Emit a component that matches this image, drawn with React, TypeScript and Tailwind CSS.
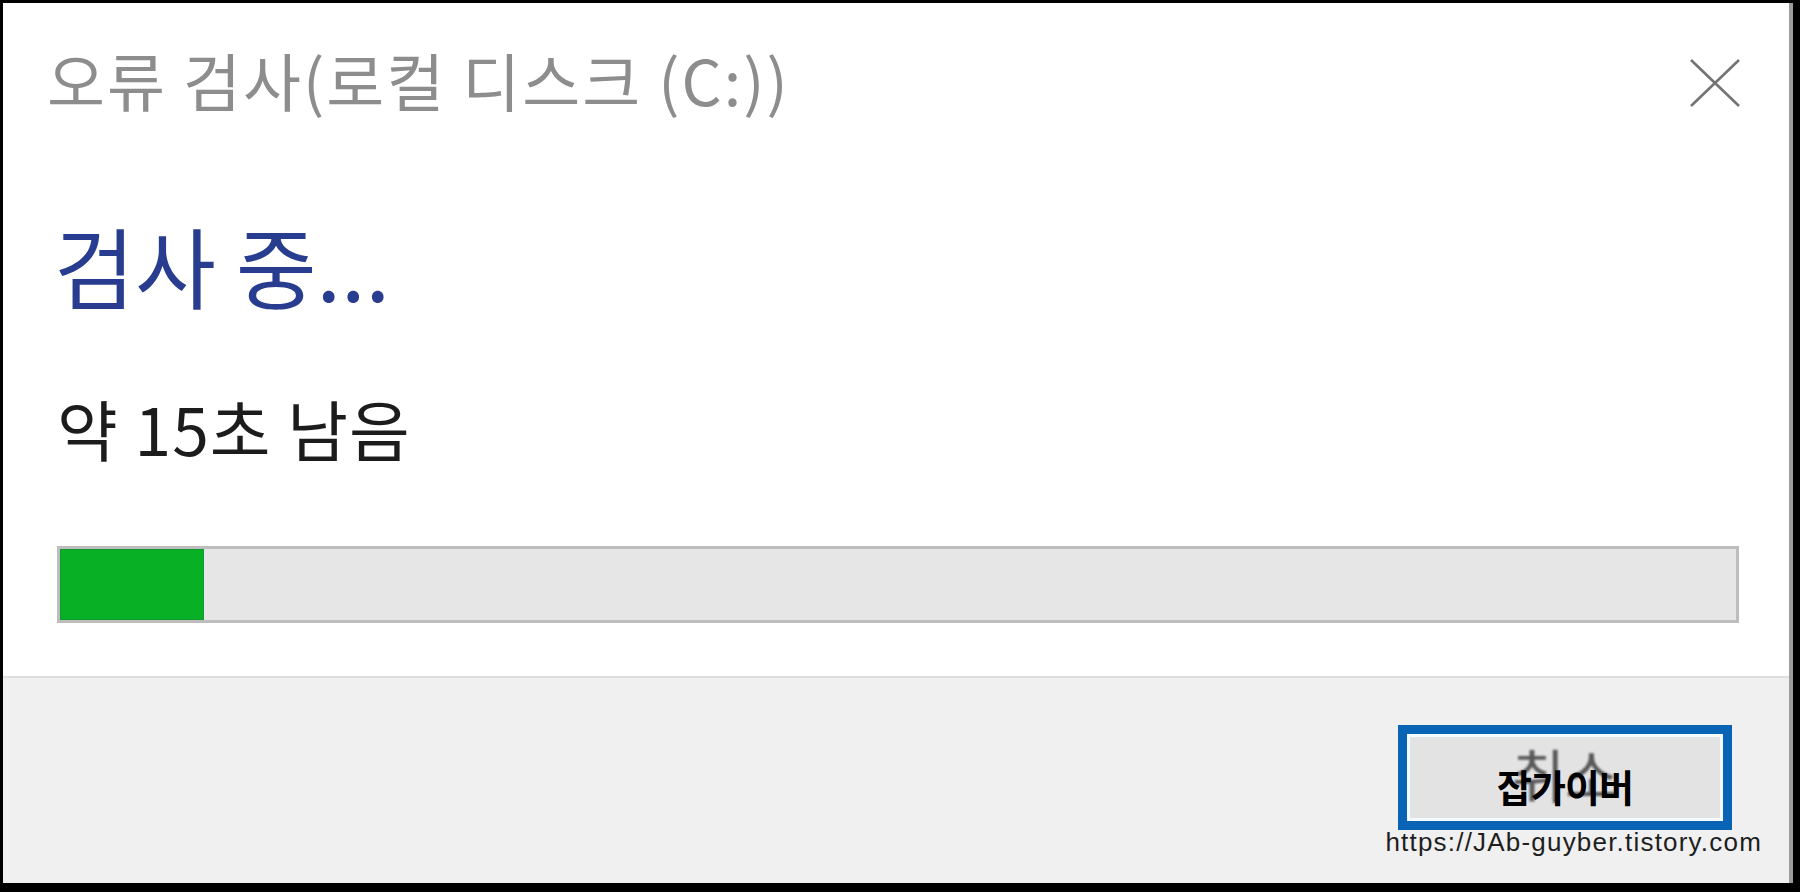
const progress = 8.6;

export default function App() {
  return (
    <div className="w-[1800px] h-[892px] bg-black flex pt-[3px] pl-[3px] pb-[9px] pr-[7px] font-['Noto_Sans_CJK_KR','Noto_Sans',sans-serif]">
      <div className="flex-1 flex flex-col bg-white border-r-4 border-[#9c9c9c]">
        {/* content */}
        <div className="flex-1 flex flex-col">
          <div className="flex items-center justify-between pt-[44px] pl-[44px] pr-[48px]">
            <h1 className="text-[63px] leading-[63px] text-[#8d8d8d] tracking-[2px]">오류 검사(로컬 디스크 (C:))</h1>
            <svg width="52" height="50" viewBox="0 0 52 50" className="mt-[8px]">
              <path d="M2 2 L50 48 M50 2 L2 48" stroke="#747474" strokeWidth="2.6" fill="none" />
            </svg>
          </div>
          <p className="mt-[110px] pl-[51px] text-[88px] leading-[88px] text-[#283d8f]">검사 중...</p>
          <p className="mt-[86px] pl-[54px] text-[66px] leading-[66px] text-[#1c1c1c] tracking-[1px]">약 15초 남음</p>
          <div className="mt-[86px] ml-[54px] mr-[50px] h-[77px] border-[3px] border-[#bdbdbd] bg-[#e6e6e6] flex">
            <div className="h-full bg-[#07b024] border border-[#139a2c]" style={{ width: `${progress}%` }} />
          </div>
        </div>
        {/* footer */}
        <div className="relative h-[207px] bg-[#f0f0f0] border-t-2 border-[#dedede] flex justify-end items-start pt-[47px] pr-[57px]">
          <button className="relative w-[334px] h-[105px] border-[9px] border-[#0a64b6] bg-[#e3e3e3] flex items-center justify-center shadow-[inset_0_0_0_3px_#f4fbff]">
            <span className="mt-[-10px] text-[58px] leading-[58px] text-[#2a2a2a] opacity-75 blur-[1px]">취소</span>
            <span className="absolute inset-0 flex items-center justify-center pt-[16px] text-[38px] font-bold text-black tracking-[-1px]">잡가이버</span>
          </button>
          <span className="absolute right-[27px] bottom-[28px] text-[26px] leading-[26px] text-[#1e1e1e] font-['Liberation_Sans',sans-serif] tracking-[1.2px]">
            https://JAb-guyber.tistory.com
          </span>
        </div>
      </div>
    </div>
  );
}
